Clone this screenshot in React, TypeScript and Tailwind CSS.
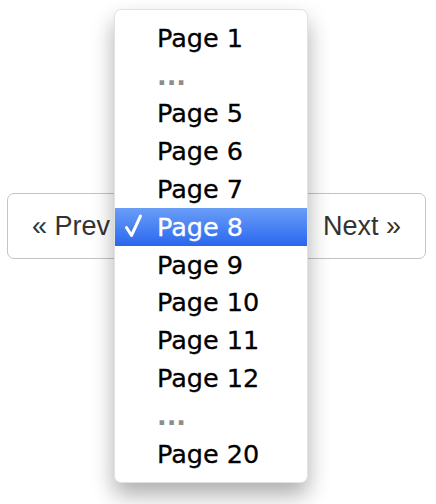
import React from "react";

const items: { label: string; muted?: boolean; selected?: boolean }[] = [
  { label: "Page 1" },
  { label: "...", muted: true },
  { label: "Page 5" },
  { label: "Page 6" },
  { label: "Page 7" },
  { label: "Page 8", selected: true },
  { label: "Page 9" },
  { label: "Page 10" },
  { label: "Page 11" },
  { label: "Page 12" },
  { label: "...", muted: true },
  { label: "Page 20" },
];

export default function App() {
  return (
    <div className="relative w-[436px] h-[504px] bg-white overflow-hidden">
      {/* pager */}
      <div className="pt-[193px] pl-[7px]">
        <div
          className="flex h-[66px] w-[419px] items-center justify-between rounded-[7px] border border-[#c4c4c4] pl-[24px] pr-[24px] text-[27px] text-[#333]"
          style={{ fontFamily: '"Liberation Sans", Arial, sans-serif' }}
        >
          <span>« Prev</span>
          <span>Next »</span>
        </div>
      </div>

      {/* open select menu */}
      <div
        className="absolute left-[114px] top-[9px] w-[194px] rounded-[7px] border border-[#e2e2e2] bg-white py-[9px] shadow-[0_12px_22px_rgba(0,0,0,0.32)]"
        style={{ fontFamily: '"DejaVu Sans", "Lucida Grande", sans-serif' }}
      >
        {items.map((it, i) => (
          <div
            key={i}
            className={
              it.selected
                ? "relative flex h-[37.8px] items-center bg-gradient-to-b from-[#6a9df7] to-[#2a66ee] pl-[42px] text-[25.5px] text-white"
                : "relative flex h-[37.8px] items-center pl-[42px] text-[25.5px] text-black"
            }
          >
            {it.selected && (
              <svg
                className="absolute left-[9px] top-[5px]"
                width="20"
                height="26"
                viewBox="0 0 20 26"
                fill="none"
              >
                <path
                  d="M2.5 14.5 L7.5 22.5 L16.5 3"
                  stroke="white"
                  strokeWidth="3"
                  strokeLinecap="round"
                  strokeLinejoin="round"
                />
              </svg>
            )}
            <span
              className={it.muted ? "text-[#8c8c8c] font-bold" : ""}
              style={it.muted ? undefined : { WebkitTextStroke: "0.3px currentColor" }}
            >
              {it.label}
            </span>
          </div>
        ))}
      </div>
    </div>
  );
}
